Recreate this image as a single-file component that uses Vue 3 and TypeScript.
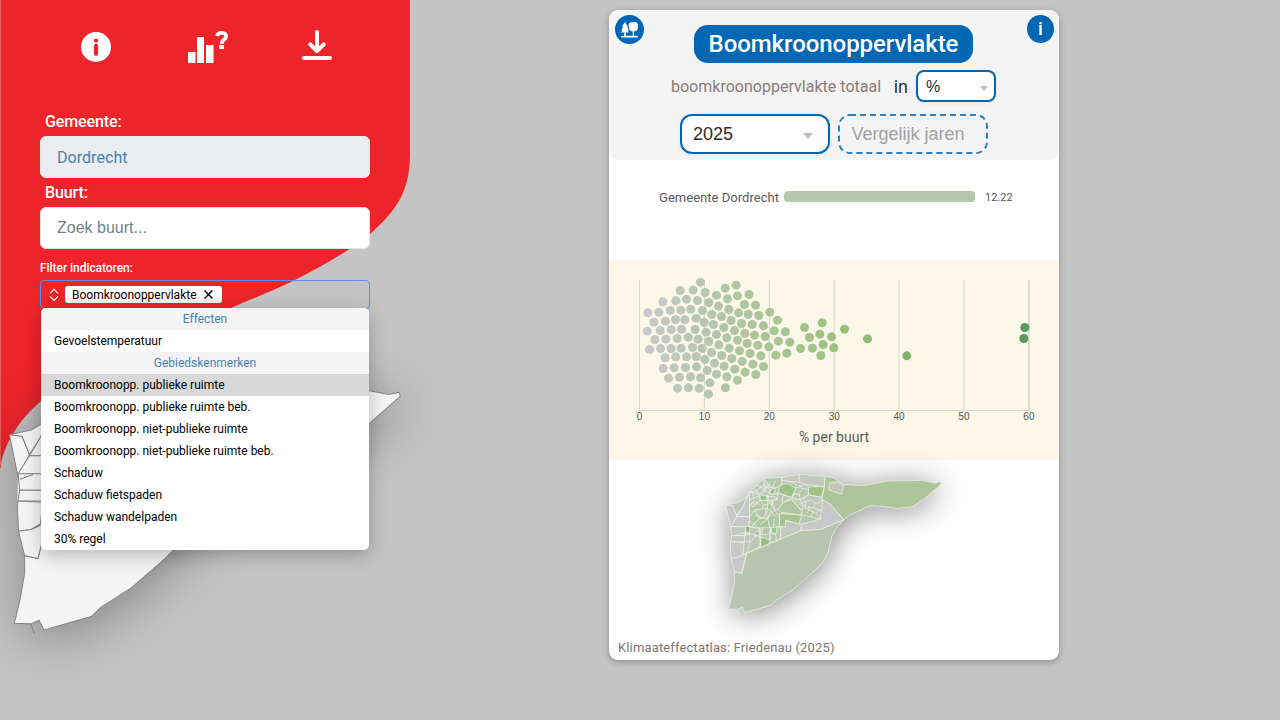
<script setup lang="ts">
type Point = [number, number]

const options = [
  { label: 'Effecten', group: true },
  { label: 'Gevoelstemperatuur' },
  { label: 'Gebiedskenmerken', group: true },
  { label: 'Boomkroonopp. publieke ruimte', active: true },
  { label: 'Boomkroonopp. publieke ruimte beb.' },
  { label: 'Boomkroonopp. niet-publieke ruimte' },
  { label: 'Boomkroonopp. niet-publieke ruimte beb.' },
  { label: 'Schaduw' },
  { label: 'Schaduw fietspaden' },
  { label: 'Schaduw wandelpaden' },
  { label: '30% regel' },
]

const ticks = [0, 10, 20, 30, 40, 50, 60]
const tickX = (t: number) => 30.5 + t * 6.49

// Swarm positions on a grid of one third of a pixel
const dots: Point[] = [
  [53, 143], [51, 198], [58, 253], [71, 171], [74, 223], [86, 141], [90, 196], [91, 250],
  [98, 110], [99, 310], [106, 168], [107, 222], [105, 278], [115, 339], [120, 136], [123, 193],
  [123, 250], [137, 107], [136, 163], [141, 220], [137, 275], [132, 308], [142, 369], [148, 336],
  [150, 76], [152, 135], [154, 192], [153, 249], [164, 164], [169, 102], [174, 216], [169, 275],
  [166, 307], [175, 368], [182, 132], [187, 247], [181, 335], [189, 75], [195, 193], [198, 159],
  [202, 106], [204, 222], [198, 274], [199, 305], [207, 369], [211, 51], [217, 136], [222, 172],
  [216, 250], [211, 338], [225, 82], [228, 201], [236, 229], [224, 283], [231, 316], [239, 353],
  [235, 387], [236, 112], [245, 148], [250, 178], [244, 262], [253, 294], [259, 327], [259, 90],
  [265, 123], [274, 154], [259, 208], [266, 239], [275, 271], [282, 303], [286, 368], [285, 69],
  [292, 101], [296, 133], [281, 187], [290, 218], [297, 249], [305, 280], [290, 335], [303, 166],
  [318, 60], [322, 92], [325, 143], [313, 196], [322, 225], [328, 257], [314, 312], [322, 345],
  [334, 175], [344, 205], [336, 289], [343, 118], [354, 148], [351, 235], [345, 321], [357, 88],
  [366, 178], [360, 265], [368, 297], [377, 328], [376, 120], [386, 151], [373, 210], [383, 240],
  [392, 272], [400, 304], [400, 182], [405, 214], [416, 245], [419, 141], [432, 197], [442, 165],
  [445, 228], [437, 270], [466, 200], [479, 231], [470, 264], [511, 250], [523, 187], [538, 217],
  [547, 249], [569, 207], [576, 173], [579, 238], [572, 271], [604, 215], [611, 248], [643, 192],
  [712, 221], [830, 272], [1184, 187], [1181, 220],
]

const stops: [number, number[]][] = [
  [40, [201, 201, 203]],
  [224, [184, 198, 176]],
  [430, [169, 197, 148]],
  [620, [155, 194, 127]],
  [835, [130, 178, 112]],
  [1185, [94, 153, 92]],
]

function dotColor(x: number): string {
  let i = 0
  while (i < stops.length - 2 && x > stops[i + 1][0]) i++
  const [x0, a] = stops[i]
  const [x1, b] = stops[i + 1]
  const t = Math.max(0, Math.min(1, (x - x0) / (x1 - x0)))
  return `rgb(${a.map((v, k) => Math.round(v + (b[k] - v) * t)).join(',')})`
}

const outline =
  '33,120 68,113 90,100 104,80 148,40 200,37 252,28 330,34 355,38 385,58 440,62 520,48 620,46 660,54 677,50 679,57 630,100 590,126 545,130 500,124 465,122 405,150 386,164 365,190 350,215 340,262 325,290 290,325 235,373 185,405 168,421 90,443 82,427 68,433 41,432 50,395 58,350 58,320 48,280 46,240 47,185'

const regions: { fill: string; points: string }[] = [
  { fill: '#b9c6af', points: '386,164 317,193 258,196 95,265 80,325 58,320 58,350 50,395 41,432 68,433 82,427 90,443 168,421 185,405 235,373 290,325 325,290 340,262 350,215 365,190' },
  { fill: '#aec59c', points: '330,34 355,38 385,58 440,62 520,48 620,46 660,54 677,50 679,57 630,100 590,126 545,130 500,124 465,122 405,150 386,164 346,118 320,103 328,65' },
  { fill: '#bfc8b9', points: '343,55 368,50 386,62 380,88 342,75' },
  { fill: '#c4c8c2', points: '252,28 330,34 328,65 270,58 252,52' },
  { fill: '#c4c8c0', points: '200,37 252,28 252,52 200,47' },
  { fill: '#c8c8c8', points: '322,103 346,118 386,164 317,193 258,196 259,178 316,162' },
  { fill: '#c2c8bd', points: '212,166 259,178 258,196 197,222 197,185 212,185' },
  { fill: '#9dc283', points: '194,60 215,55 243,70 230,98 190,84' },
  { fill: '#9dc283', points: '280,66 327,65 320,97 280,90' },
  { fill: '#a7c591', points: '194,146 260,150 252,177 212,166 212,185 192,185' },
  { fill: '#b1c6a2', points: '205,112 230,104 262,140 255,150 200,142 190,132' },
  { fill: '#c8c8c8', points: '33,120 54,123 66,153 47,190' },
  { fill: '#c0c8ba', points: '33,120 68,113 90,100 104,80 84,125 66,153 54,123' },
  { fill: '#c8c8c8', points: '104,80 104,155 66,155 84,125' },
  { fill: '#c8c8c8', points: '66,155 104,155 102,185 47,185' },
  { fill: '#c4c8c0', points: '47,185 92,185 90,212 50,212' },
  { fill: '#c4c8c0', points: '50,212 90,212 88,230 47,230' },
  { fill: '#c8c8c8', points: '47,230 88,232 84,268 69,277 48,280 46,240' },
  { fill: '#c8c8c8', points: '48,280 69,277 95,265 80,325 58,320' },
  { fill: '#bec7b8', points: '92,185 135,190 135,245 95,265 84,268 88,232' },
  { fill: '#9bc17f', points: '138,216 166,225 165,234 137,248' },
  { fill: '#b8c7ad', points: '166,195 197,185 197,222 165,234' },
  { fill: '#a1c489', points: '170,184 186,184 184,205 169,205' },
  { fill: '#82b16f', points: '92,184 104,185 104,202 93,202' },
  { fill: '#b1c6a2', points: '104,155 120,135 134,160 110,185 102,185' },
  { fill: '#b5c6a8', points: '120,135 150,130 158,160 134,160' },
  { fill: '#aec59c', points: '134,160 158,160 165,188 137,189 110,185' },
  { fill: '#b1c6a2', points: '158,160 180,135 194,160 192,185 165,188' },
  { fill: '#bec7b8', points: '104,80 134,88 136,105 115,125 104,120' },
  { fill: '#b5c6a8', points: '115,125 136,105 158,107 158,130 120,135 104,155 104,120' },
  { fill: '#c0c8ba', points: '104,80 148,40 160,60 150,77 134,88' },
  { fill: '#b6c7aa', points: '148,40 200,37 200,60 180,70 160,60' },
  { fill: '#bec7b8', points: '150,77 163,84 172,88 190,84 185,104 158,107 160,95 134,88' },
  { fill: '#b8c7ad', points: '185,104 190,84 230,98 205,112 190,132 180,135 172,108' },
  { fill: '#b6c7aa', points: '243,70 270,58 280,66 280,90 255,105 230,98' },
  { fill: '#c0c8ba', points: '255,105 280,90 320,97 322,130 302,145 270,128' },
  { fill: '#b1c6a2', points: '230,98 255,105 270,128 302,145 316,162 260,150 262,140' },
  { fill: '#a1c489', points: '158,120 172,108 168,130 158,135' },
  { fill: '#9dc283', points: '134,88 160,95 148,107 136,105' },
  { fill: '#9dc283', points: '166,75 176,69 182,78 172,88 163,84' },
  { fill: '#4f9250', points: '122,202 134,198 127,212 121,213' },
]

const streets = [
  'M104 80L125 78L145 60M116 69L134 88M125 60L150 77M134 66L157 66M145 45L150 60L146 83',
  'M112 84L116 100L104 106M116 100L134 93M112 112L125 120M104 120L119 109L134 119',
  'M145 59L166 75L155 97M158 95L176 94M165 50L160 67L180 70M176 94L190 104M180 48L174 66',
  'M208 46L222 50L245 59L243 70M137 105L145 120L158 119M145 120L142 132M160 107L168 120L180 135',
  'M158 160L135 180M120 150L145 160L158 134M104 170L125 182M165 188L165 225M135 190L137 248',
  'M104 206L120 210L139 216M104 202L104 235M104 235L130 200L138 190M90 212L104 206M88 230L104 230M104 235L95 265',
  'M143 190L140 209L166 207M169 205L182 208L184 225M178 160L175 188M158 160L167 136L182 155',
  'M215 80L204 94L202 110M230 98L240 85L254 92L255 105M250 59L262 70L254 82L254 92M262 70L278 73',
  'M260 98L272 110L270 128M241 105L258 117L270 110M250 116L264 124L260 137M272 110L290 105L300 115L295 128L280 127',
  'M300 115L312 113L318 104M295 128L306 133M282 122L280 137L276 147M295 140L289 154M306 133L318 137',
  'M58 213L80 205L104 206M68 433L71 449',
]
</script>

<template>
  <div class="page">
    <aside class="panel">
      <svg class="backdrop" width="410" height="720" viewBox="0 0 410 720" aria-hidden="true">
        <path
          fill="#ed252a"
          d="M0 0H410V155C410 192 395 212 370 234C352 249 326 264 293 281C270 292 251 299 231 308C130 351 79 374 41 401C20 419 5 441 0 468Z"
        />
        <rect width="1" height="468" fill="#e65c60" />
        <g class="region-map" transform="translate(-10.5 361.9) scale(.605)">
          <polygon :points="outline" fill="#f4f4f4" />
          <g fill="#f4f4f4" stroke="#858585" stroke-width="1.7" stroke-linejoin="round">
            <polygon v-for="(r, i) in regions.slice(0, 19)" :key="i" :points="r.points" />
            <path d="M50 194L72 186M68 433L74 449" fill="none" />
          </g>
        </g>
      </svg>

      <nav class="tools">
        <svg width="30" height="30" viewBox="0 0 30 30">
          <circle cx="15" cy="15" r="15" fill="#fff" />
          <circle cx="15" cy="8.6" r="2.1" fill="#ed252a" />
          <path d="M15 13.8V21.8" stroke="#ed252a" stroke-width="4.2" stroke-linecap="round" />
        </svg>
        <svg class="bars" width="41" height="34" viewBox="0 0 41 34">
          <path d="M0 22H7.5V33H0ZM9 7H16V33H9ZM18 15H25.5V33H18Z" fill="#fff" />
          <path d="M29 6C30 1.6 38.3 1.8 38.1 6.4C37.8 9.8 33.6 9.4 33.6 14" fill="none" stroke="#fff" stroke-width="3.8" />
          <rect x="31.3" y="15" width="4.7" height="4" fill="#fff" />
        </svg>
        <svg class="download" width="30" height="31" viewBox="0 0 30 31">
          <path
            d="M15 2V21M8.2 14.3L15 21L21.8 14.3M2 28H28"
            fill="none"
            stroke="#fff"
            stroke-width="4"
            stroke-linecap="round"
            stroke-linejoin="round"
          />
        </svg>
      </nav>

      <form class="search" @submit.prevent>
        <label class="lbl">Gemeente:</label>
        <div class="field chosen">Dordrecht</div>
        <label class="lbl second">Buurt:</label>
        <div class="field">Zoek buurt...</div>

        <label class="lbl small">Filter indicatoren:</label>
        <div class="filter">
          <svg width="10" height="14" viewBox="0 0 10 14" fill="none" stroke="#fff" stroke-width="1.1">
            <path d="M1 5.4L5 1.4L9 5.4M1 8.4L5 12.4L9 8.4" />
          </svg>
          <span class="tag">
            Boomkroonoppervlakte
            <svg width="9" height="9" viewBox="0 0 9 9" stroke="#000" stroke-width="1.4"><path d="M.6 .6L8.4 8.4M8.4 .6L.6 8.4" /></svg>
          </span>
          <ul class="menu">
            <li v-for="o in options" :key="o.label" :class="{ group: o.group, active: o.active }">{{ o.label }}</li>
          </ul>
        </div>
      </form>
    </aside>

    <main class="card">
      <header class="head">
        <svg class="tree" width="29" height="29" viewBox="0 0 29 29">
          <circle cx="14.5" cy="14.5" r="14.5" fill="#0067b4" />
          <path
            fill="#fff"
            d="M10 7L12.6 11.3L12.3 11.7L13.6 15.2L13 16L14 17.6H10.9V20.7H17.7V16.5C14.8 16 13.4 13.6 13.9 11.4C12.8 8.6 15.4 6.6 17.6 7.3C20.8 6.2 23.8 8.4 22.9 11.2C23.4 14.2 21.8 16.2 19 16.5V20.7L22.6 21.1V22.6H6.2V21.1L9.2 20.7V17.6H5.7L7.3 15.4L6.5 14.9L8 11.5L7.3 11Z"
          />
        </svg>
        <span class="info">i</span>
        <h1>Boomkroonoppervlakte</h1>
        <div class="row unit-row">
          <span class="sub">boomkroonoppervlakte totaal</span>
          <span class="in">in</span>
          <div class="select unit"><span>%</span><i class="caret"></i></div>
        </div>
        <div class="row">
          <div class="select year">2025<i class="caret"></i></div>
          <div class="compare">
            <svg class="dash" width="150" height="40" viewBox="0 0 150 40">
              <rect x="1" y="1" width="148" height="38" rx="11" fill="none" stroke="#2f80c0" stroke-width="2" stroke-dasharray="6 4" />
            </svg>
            <span>Vergelijk jaren</span>
          </div>
        </div>
      </header>

      <section class="average">
        <span class="name">Gemeente Dordrecht</span>
        <span class="bar"></span>
        <span class="value">12.22</span>
      </section>

      <section class="swarm">
        <svg width="450" height="200" viewBox="0 0 450 200">
          <g stroke="#d8d7d2" stroke-width="1.1">
            <path v-for="t in ticks" :key="t" :d="`M${tickX(t)} 20V150.5`" />
            <path d="M30 150.5H420" />
            <path d="M420 20V150.5" />
          </g>
          <g transform="translate(21 5) scale(.33333)">
            <circle v-for="(d, i) in dots" :key="i" :cx="d[0] + 0.5" :cy="d[1] + 0.5" r="13.6" :fill="dotColor(d[0])" />
          </g>
          <g class="ticks">
            <text v-for="t in ticks" :key="t" :x="tickX(t)" y="160">{{ t }}</text>
          </g>
          <text class="axis" x="225" y="182">% per buurt</text>
        </svg>
      </section>

      <section class="map">
        <svg width="450" height="180" viewBox="0 0 450 180">
          <g class="choropleth" transform="translate(106 5) scale(.33333)">
            <polygon :points="outline" fill="#b9c6af" />
            <g stroke="#eef1ec" stroke-width="2.2" stroke-linejoin="round">
              <polygon v-for="(r, i) in regions" :key="i" :points="r.points" :fill="r.fill" />
              <path v-for="s in streets" :key="s" :d="s" fill="none" />
            </g>
          </g>
        </svg>
      </section>

      <footer class="source">Klimaateffectatlas: Friedenau (2025)</footer>
    </main>
  </div>
</template>

<style>
body {
  margin: 0;
  overflow: hidden;
}
</style>

<style scoped>
.page {
  display: flex;
  gap: 199px;
  width: 1280px;
  height: 720px;
  background: #c4c4c4;
  font-family: Roboto, 'Liberation Sans', sans-serif;
  overflow: hidden;
}
.page * {
  box-sizing: border-box;
}
svg {
  display: block;
  flex: none;
}
.panel {
  position: relative;
  width: 410px;
  height: 720px;
  flex: none;
}
.backdrop {
  position: absolute;
  inset: 0;
  overflow: visible;
}
.region-map {
  filter: drop-shadow(6px 10px 44px rgba(0, 0, 0, 0.34));
}
.tools {
  position: relative;
  display: flex;
  align-items: flex-start;
  padding: 32px 0 0 81px;
  height: 112px;
}
.bars {
  margin: -2px 0 0 77px;
}
.download {
  margin: -2px 0 0 73px;
}
.search {
  position: relative;
  width: 330px;
  margin-left: 40px;
}
.lbl {
  display: block;
  height: 24px;
  padding-left: 5px;
  line-height: 20px;
  font-size: 16px;
  font-weight: 500;
  letter-spacing: -0.1px;
  color: #fff;
}
.lbl.second {
  height: 29px;
  line-height: 29px;
}
.lbl.small {
  height: 31px;
  padding: 0;
  line-height: 38px;
  font-size: 12px;
  letter-spacing: -0.05px;
}
.field {
  height: 42px;
  padding-left: 16px;
  border: 1px solid #dee2e6;
  border-radius: 6px;
  background: #fff;
  line-height: 40px;
  font-family: 'Liberation Sans', Arial, sans-serif;
  font-size: 16px;
  color: #6f7f8c;
}
.field.chosen {
  background: #ebedef;
  border-color: #ebedef;
  line-height: 42px;
  font-family: Roboto, sans-serif;
  letter-spacing: 0.05px;
  color: #4682b4;
}
.filter {
  position: relative;
  display: flex;
  align-items: center;
  gap: 6px;
  height: 29px;
  padding-left: 8px;
  border: 1px solid #5c8de8;
  border-radius: 4px;
}
.tag {
  display: flex;
  align-items: center;
  gap: 7px;
  height: 17px;
  padding: 0 9px 0 7px;
  border-radius: 3px;
  background: linear-gradient(#fff 60%, #f1f1f1);
  font-size: 12px;
  color: #000;
}
.menu {
  position: absolute;
  left: 0;
  top: 27px;
  width: 328px;
  margin: 0;
  padding: 0;
  list-style: none;
  overflow: hidden;
  border-radius: 5px;
  background: #fff;
  box-shadow: 0 5px 18px rgba(0, 0, 0, 0.25);
  font-size: 12px;
  color: #000;
}
.menu li {
  height: 22px;
  padding-left: 13px;
  line-height: 22px;
}
.menu .group {
  padding: 0;
  background: #f4f4f4;
  text-align: center;
  color: #4682b4;
}
.menu .active {
  background: #d8d8d8;
}
.card {
  display: flex;
  flex-direction: column;
  width: 450px;
  height: 650px;
  margin-top: 10px;
  border-radius: 9px;
  background: #fff;
  box-shadow: 0 2px 6px rgba(0, 0, 0, 0.28);
  overflow: hidden;
}
.head {
  position: relative;
  display: flex;
  flex-direction: column;
  align-items: center;
  height: 150px;
  padding-top: 15px;
  border-radius: 9px;
  background: #f4f4f4;
}
.tree {
  position: absolute;
  left: 6px;
  top: 5px;
}
.info {
  position: absolute;
  right: 5px;
  top: 5px;
  width: 27px;
  height: 28px;
  border-radius: 50%;
  background: #0067b4;
  text-align: center;
  line-height: 27px;
  font-size: 19px;
  font-weight: 500;
  color: #fff;
}
h1 {
  width: 279px;
  height: 38px;
  margin: 0 1px 7px 0;
  border-radius: 14px;
  background: #0067b4;
  text-align: center;
  line-height: 38px;
  font-size: 24px;
  font-weight: 500;
  letter-spacing: -0.06px;
  color: #fff;
}
.row {
  display: flex;
  align-items: center;
  gap: 8px;
}
.unit-row {
  gap: 0;
  margin: 0 1px 12px 0;
}
.sub {
  font-size: 16px;
  letter-spacing: 0.02px;
  color: #857d78;
}
.in {
  margin: 0 8px 0 12.5px;
  font-size: 18px;
  color: #333;
}
.select {
  display: flex;
  align-items: center;
  justify-content: space-between;
  border: 2px solid #0067b4;
  background: #fff;
  box-shadow: 0 2px 5px rgba(0, 60, 100, 0.06);
  font-family: 'Liberation Sans', Arial, sans-serif;
  color: #2b2b2b;
}
.unit {
  width: 80px;
  height: 32px;
  padding: 0 6px 0 8px;
  border-radius: 8px;
  font-size: 16px;
}
.unit span {
  padding-top: 2px;
}
.year {
  width: 150px;
  height: 40px;
  padding: 0 15px 0 11px;
  border-radius: 12px;
  font-size: 18px;
}
.caret {
  margin-top: 4px;
  border: 4.5px solid transparent;
  border-top: 5px solid #c1c1c1;
  border-bottom: 0;
}
.year .caret {
  margin-top: 3px;
  border-width: 6px 5.5px 0;
}
.compare {
  position: relative;
  width: 150px;
  height: 40px;
  padding-left: 13.5px;
  line-height: 40px;
  font-family: 'Liberation Sans', Arial, sans-serif;
  font-size: 18px;
  color: #a2a2a2;
}
.dash {
  position: absolute;
  inset: 0;
}
.average {
  display: flex;
  align-items: center;
  height: 100px;
  padding: 0 0 27px 50px;
  color: #5a5a5a;
}
.name {
  width: 125px;
  padding-top: 1px;
  font-size: 13px;
  letter-spacing: 0.03px;
  white-space: nowrap;
}
.bar {
  width: 191px;
  height: 11px;
  border-radius: 4px;
  background: #b9c6af;
}
.value {
  margin-left: 10px;
  padding-top: 1px;
  font-size: 11px;
}
.swarm {
  height: 200px;
  background: #fcf8e9;
}
.ticks text {
  font-size: 10px;
  font-family: 'Liberation Sans', Arial, sans-serif;
  text-anchor: middle;
  fill: #555;
}
.axis {
  font-size: 14px;
  text-anchor: middle;
  fill: #5a5a5a;
}
.map {
  height: 180px;
}
.map svg {
  overflow: visible;
}
.choropleth {
  filter: drop-shadow(4px 10px 44px rgba(0, 0, 0, 0.46));
}
.source {
  padding-left: 9px;
  line-height: 15px;
  font-size: 13px;
  letter-spacing: 0.15px;
  color: #7d7670;
}
</style>
